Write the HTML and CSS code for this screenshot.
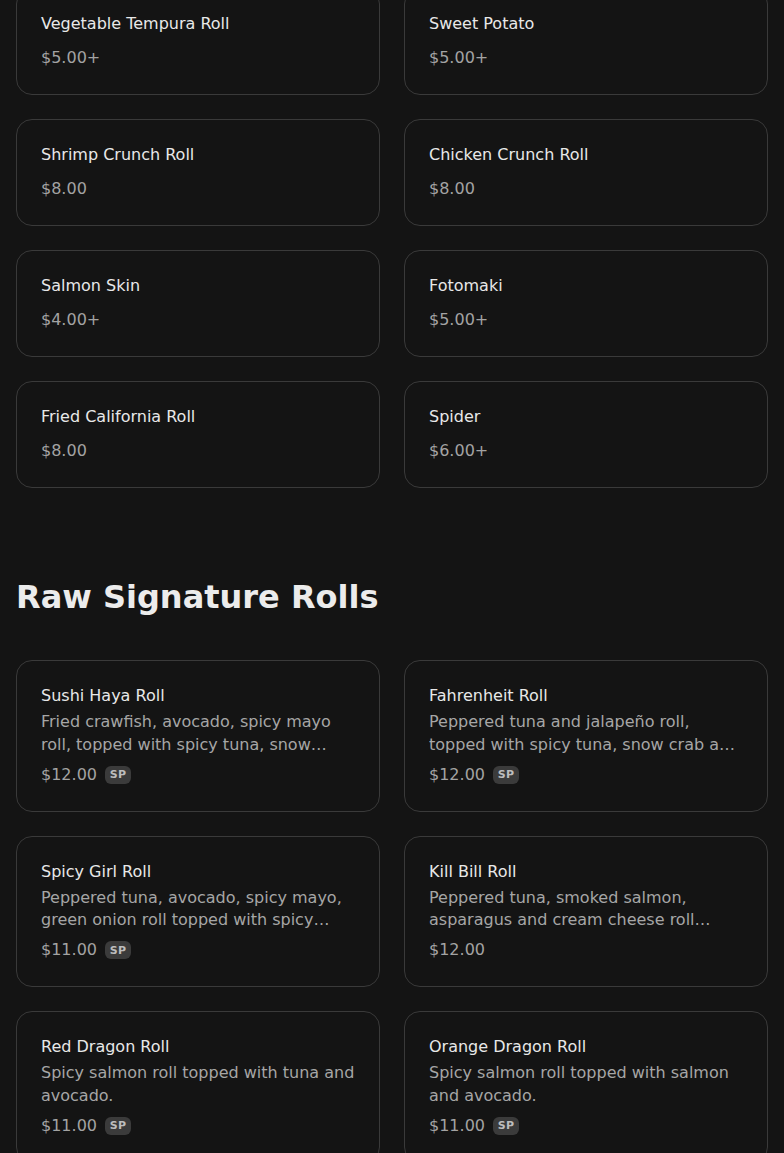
FILE: index.html
```html
<!DOCTYPE html>
<html lang="en">
<head>
<meta charset="utf-8">
<title>Menu</title>
<link rel="stylesheet" href="styles.css">
</head>
<body>
<main class="page">
  <section class="section section-first">
    <div class="grid">
      <div class="card"><div class="title">Vegetable Tempura Roll</div><div class="price-row plain"><span class="price">$5.00+</span></div></div>
      <div class="card"><div class="title">Sweet Potato</div><div class="price-row plain"><span class="price">$5.00+</span></div></div>
      <div class="card"><div class="title">Shrimp Crunch Roll</div><div class="price-row plain"><span class="price">$8.00</span></div></div>
      <div class="card"><div class="title">Chicken Crunch Roll</div><div class="price-row plain"><span class="price">$8.00</span></div></div>
      <div class="card"><div class="title">Salmon Skin</div><div class="price-row plain"><span class="price">$4.00+</span></div></div>
      <div class="card"><div class="title">Fotomaki</div><div class="price-row plain"><span class="price">$5.00+</span></div></div>
      <div class="card"><div class="title">Fried California Roll</div><div class="price-row plain"><span class="price">$8.00</span></div></div>
      <div class="card"><div class="title">Spider</div><div class="price-row plain"><span class="price">$6.00+</span></div></div>
    </div>
  </section>

  <section class="section section-next">
    <h2 class="section-title">Raw Signature Rolls</h2>
    <div class="grid">
      <div class="card">
        <div class="title">Sushi Haya Roll</div>
        <p class="desc">Fried crawfish, avocado, spicy mayo roll, topped with spicy tuna, snow crab, eel sauce and spicy mayo.</p>
        <div class="price-row"><span class="price">$12.00</span><span class="badge">SP</span></div>
      </div>
      <div class="card">
        <div class="title">Fahrenheit Roll</div>
        <p class="desc">Peppered tuna and jalapeño roll, topped with spicy tuna, snow crab and sriracha.</p>
        <div class="price-row"><span class="price">$12.00</span><span class="badge">SP</span></div>
      </div>
      <div class="card">
        <div class="title">Spicy Girl Roll</div>
        <p class="desc">Peppered tuna, avocado, spicy mayo, green onion roll topped with spicy salmon and crunch.</p>
        <div class="price-row"><span class="price">$11.00</span><span class="badge">SP</span></div>
      </div>
      <div class="card">
        <div class="title">Kill Bill Roll</div>
        <p class="desc">Peppered tuna, smoked salmon, asparagus and cream cheese roll topped with avocado.</p>
        <div class="price-row"><span class="price">$12.00</span></div>
      </div>
      <div class="card">
        <div class="title">Red Dragon Roll</div>
        <p class="desc">Spicy salmon roll topped with tuna and avocado.</p>
        <div class="price-row"><span class="price">$11.00</span><span class="badge">SP</span></div>
      </div>
      <div class="card">
        <div class="title">Orange Dragon Roll</div>
        <p class="desc">Spicy salmon roll topped with salmon and avocado.</p>
        <div class="price-row"><span class="price">$11.00</span><span class="badge">SP</span></div>
      </div>
    </div>
  </section>
</main>
</body>
</html>
```

FILE: styles.css
```css
html, body {
  margin: 0;
  padding: 0;
  background: #141414;
}

body {
  font-family: "DejaVu Sans", "Liberation Sans", sans-serif;
  color: #e6e6e6;
  font-size: 16px;
}

.page {
  padding: 0 16px;
  margin-top: -12px;
}

.grid {
  display: grid;
  grid-template-columns: 1fr 1fr;
  gap: 24px;
}

.card {
  border: 1px solid #3a3a3a;
  border-radius: 16px;
  padding: 24px;
  background: #141414;
  display: flex;
  flex-direction: column;
  min-width: 0;
}

.title {
  font-size: 16px;
  line-height: 22px;
  color: #e8e8e8;
}

.desc {
  margin: 4px 0 0;
  font-size: 16px;
  line-height: 22.5px;
  color: #a6a6a6;
  display: -webkit-box;
  -webkit-line-clamp: 2;
  -webkit-box-orient: vertical;
  overflow: hidden;
}

.price-row {
  display: flex;
  align-items: center;
  gap: 8px;
  height: 23.5px;
  margin-top: 7px;
}

.price-row.plain {
  height: 25px;
  margin-top: 10px;
}

.price {
  font-size: 16px;
  line-height: 24px;
  color: #a3a3a3;
}

.badge {
  display: inline-flex;
  align-items: center;
  justify-content: center;
  width: 26px;
  height: 18px;
  border-radius: 6px;
  background: #3b3b3b;
  color: #bdbdbd;
  font-size: 11px;
  font-weight: bold;
  letter-spacing: 0.3px;
}

.section-next {
  margin-top: 89px;
}

.section-title {
  margin: 0 0 43px;
  font-size: 32px;
  line-height: 40px;
  font-weight: bold;
  color: #ececec;
}
```
